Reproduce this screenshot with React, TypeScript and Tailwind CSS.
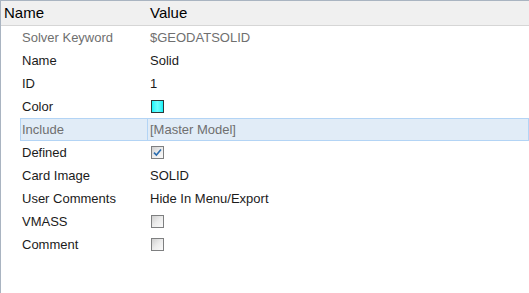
import React from "react";

type Row = {
  name: string;
  value?: string;
  kind?: "text" | "color" | "check" | "uncheck";
  muted?: boolean;
  selected?: boolean;
};

const rows: Row[] = [
  { name: "Solver Keyword", value: "$GEODATSOLID", muted: true },
  { name: "Name", value: "Solid" },
  { name: "ID", value: "1" },
  { name: "Color", kind: "color" },
  { name: "Include", value: "[Master Model]", muted: true, selected: true },
  { name: "Defined", kind: "check" },
  { name: "Card Image", value: "SOLID" },
  { name: "User Comments", value: "Hide In Menu/Export" },
  { name: "VMASS", kind: "uncheck" },
  { name: "Comment", kind: "uncheck" },
];

function Swatch() {
  return (
    <span className="block h-[13px] w-[13px] border border-[#2e3838] bg-gradient-to-r from-[#00f4fa] via-[#6affff] to-[#00f0f6]" />
  );
}

function Checkbox({ checked }: { checked: boolean }) {
  return (
    <span className="flex h-[13px] w-[13px] items-center justify-center border border-[#7e7f80] bg-gradient-to-br from-[#cfcfcf] via-[#ececec] to-[#fafafa] p-[1px]">
      {checked && (
        <svg width="9" height="9" viewBox="0 0 9 9">
          <path d="M1 4.6 L3.4 7 L8 1.6" fill="none" stroke="#2a6cae" strokeWidth="1.6" />
        </svg>
      )}
    </span>
  );
}

export default function App() {
  return (
    <div
      className="h-[293px] w-[529px] overflow-hidden border-l border-[#a9b4c1] bg-white text-[13px] text-[#1b1b1b]"
      style={{ fontFamily: '"Liberation Sans", Arial, sans-serif' }}
    >
      <div className="flex h-[26px] items-center border-t border-b border-t-[#a9b4c1] border-b-[#d6d6d6] bg-[#f0f0f0] text-[15px] text-black">
        <div className="w-[146px] pl-[3px]">Name</div>
        <div className="pl-[3px]">Value</div>
      </div>
      {rows.map((r) => (
        <div
          key={r.name}
          className={
            "ml-[19px] flex h-[23px] items-center border " +
            (r.selected ? "border-[#b3d4f5] bg-[#e1ecf7]" : "border-transparent")
          }
        >
          <div className={"w-[126px] pl-[1px] " + (r.muted ? "text-[#6f6f6f]" : "")}>{r.name}</div>
          <div
            className={
              "flex h-full items-center border-l pl-[2px] " +
              (r.selected ? "border-[#b3d4f5]" : "border-transparent") +
              (r.muted ? " text-[#6f6f6f]" : "")
            }
          >
            {r.kind === "color" ? (
              <span className="pl-[1px]">
                <Swatch />
              </span>
            ) : r.kind === "check" || r.kind === "uncheck" ? (
              <span className="pl-[1px]">
                <Checkbox checked={r.kind === "check"} />
              </span>
            ) : (
              r.value
            )}
          </div>
        </div>
      ))}
    </div>
  );
}
